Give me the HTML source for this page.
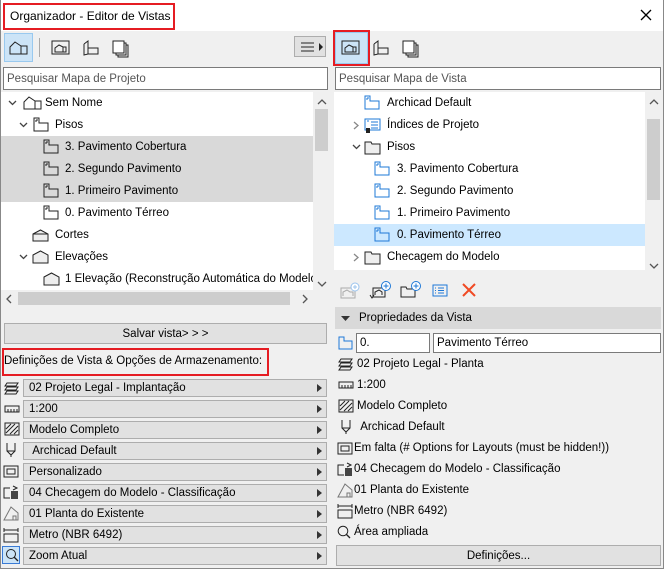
<!DOCTYPE html>
<html><head><meta charset="utf-8">
<style>
*{box-sizing:border-box;margin:0;padding:0}
body{width:664px;height:569px;overflow:hidden;background:#f0f0f0;font-family:"Liberation Sans",sans-serif;font-size:11.5px;color:#000;position:relative}
.a{position:absolute}
.t{position:absolute;white-space:nowrap;line-height:14px}
svg{position:absolute;overflow:visible}
.dd{position:absolute;left:23px;width:304px;height:18px;background:#e1e1e1;border:1px solid #adadad;padding-left:5px;line-height:16px;white-space:nowrap;font-size:11.5px}
.dd:after{content:"";position:absolute;right:4px;top:4px;border-left:5px solid #333;border-top:4px solid transparent;border-bottom:4px solid transparent}
.pr{position:absolute;left:357px;white-space:nowrap;line-height:14px}
</style></head><body>
<div class="a" style="left:0;top:0;width:664px;height:31px;background:#fff"></div>
<div class="a" style="left:0;top:0;width:1px;height:569px;background:#888"></div>
<div class="a" style="left:663px;top:0;width:1px;height:569px;background:#888"></div>
<div class="a" style="left:0;top:568px;width:664px;height:1px;background:#888"></div>
<div class="a" style="left:3px;top:3px;width:172px;height:27px;border:2px solid #e51c23"></div>
<div class="t" style="left:10px;top:9px;font-size:12px">Organizador - Editor de Vistas</div>
<svg style="left:640px;top:9px" width="12" height="12"><path d="M1 1L11 11M11 1L1 11" stroke="#000" stroke-width="1.3"/></svg>

<div class="a" style="left:4px;top:33px;width:29px;height:29px;background:#cce4f7;border:1px solid #99c9ef"></div>
<svg style="left:9px;top:41px" width="20" height="14"><path d="M1 13V6L6 1L12 5H18V13ZM12 5V13M6 1L12 5" fill="none" stroke="#222"/></svg>
<div class="a" style="left:39px;top:38px;width:1px;height:19px;background:#aaa"></div>
<svg style="left:51px;top:40px" width="20" height="16"><rect x="1" y="1" width="17" height="13" fill="none" stroke="#222"/><path d="M4 12V8L8 5L12 7H15V12ZM12 7V12" fill="none" stroke="#222"/></svg>
<svg style="left:81px;top:40px" width="20" height="16"><path d="M3 4L7 1V14H17V8H7M3 4V15L7 14" fill="none" stroke="#222"/></svg>
<svg style="left:112px;top:40px" width="18" height="18"><rect x="1" y="1" width="11" height="12" fill="#fff" stroke="#222"/><path d="M12 3H14V15H4V13M14 5H16V17H6V15" fill="none" stroke="#222"/></svg>
<div class="a" style="left:294px;top:36px;width:32px;height:21px;background:#e1e1e1;border:1px solid #adadad"></div>
<svg style="left:301px;top:42px" width="22" height="10"><path d="M0 1H13M0 5H13M0 9H13" stroke="#222"/><path d="M18 1L22 5L18 9Z" fill="#222"/></svg>

<div class="a" style="left:333px;top:30px;width:37px;height:36px;border:2px solid #e51c23"></div>
<div class="a" style="left:335px;top:32px;width:33px;height:32px;background:#cce4f7;border:1px solid #99c9ef"></div>
<svg style="left:341px;top:40px" width="20" height="16"><rect x="1" y="1" width="17" height="13" fill="none" stroke="#222"/><path d="M4 12V8L8 5L12 7H15V12ZM12 7V12" fill="none" stroke="#222"/></svg>
<svg style="left:371px;top:40px" width="20" height="16"><path d="M3 4L7 1V14H17V8H7M3 4V15L7 14" fill="none" stroke="#222"/></svg>
<svg style="left:402px;top:40px" width="18" height="18"><rect x="1" y="1" width="11" height="12" fill="#fff" stroke="#222"/><path d="M12 3H14V15H4V13M14 5H16V17H6V15" fill="none" stroke="#222"/></svg>

<div class="a" style="left:3px;top:67px;width:325px;height:23px;background:#fff;border:1px solid #7a7a7a"></div>
<div class="t" style="left:7px;top:72px;color:#555">Pesquisar Mapa de Projeto</div>
<div class="a" style="left:335px;top:67px;width:326px;height:23px;background:#fff;border:1px solid #7a7a7a"></div>
<div class="t" style="left:339px;top:72px;color:#555">Pesquisar Mapa de Vista</div>

<div class="a" style="left:1px;top:92px;width:313px;height:198px;background:#fff"></div>
<div class="a" style="left:1px;top:136px;width:312px;height:66px;background:#d9d9d9"></div>
<div class="a" style="left:313px;top:92px;width:17px;height:198px;background:#f0f0f0"></div>
<div class="a" style="left:315px;top:109px;width:13px;height:42px;background:#cdcdcd"></div>
<svg style="left:318px;top:99px" width="8" height="6"><path d="M0 5L4 1L8 5" fill="none" stroke="#555" stroke-width="1.3"/></svg>
<svg style="left:318px;top:281px" width="8" height="6"><path d="M0 1L4 5L8 1" fill="none" stroke="#555" stroke-width="1.3"/></svg>
<div class="a" style="left:1px;top:290px;width:330px;height:18px;background:#f0f0f0"></div>
<div class="a" style="left:18px;top:292px;width:272px;height:13px;background:#cdcdcd"></div>
<svg style="left:6px;top:295px" width="6" height="8"><path d="M5 0L1 4L5 8" fill="none" stroke="#555" stroke-width="1.3"/></svg>
<svg style="left:302px;top:295px" width="6" height="8"><path d="M1 0L5 4L1 8" fill="none" stroke="#555" stroke-width="1.3"/></svg>

<svg style="left:8px;top:100px" width="9" height="6"><path d="M1 1L4.5 4.5L8 1" fill="none" stroke="#444" stroke-width="1.3"/></svg>
<svg style="left:23px;top:96px" width="20" height="14"><path d="M1 13V6L6 1L12 5H18V13ZM12 5V13M6 1L12 5" fill="none" stroke="#222"/></svg>
<div class="t" style="left:45px;top:96px">Sem Nome</div>
<svg style="left:19px;top:122px" width="9" height="6"><path d="M1 1L4.5 4.5L8 1" fill="none" stroke="#444" stroke-width="1.3"/></svg>
<svg style="left:33px;top:117px" width="17" height="15"><path d="M1 1H6V6H15V14H1Z" fill="none" stroke="#222"/><path d="M3 3V5M3 3H5" stroke="#222"/></svg>
<div class="t" style="left:55px;top:118px">Pisos</div>

<svg style="left:43px;top:139px" width="17" height="15"><path d="M1 1H6V6H15V14H1Z" fill="none" stroke="#222"/><path d="M3 3V5M3 3H5" stroke="#222"/></svg>
<div class="t" style="left:65px;top:140px">3. Pavimento Cobertura</div>
<svg style="left:43px;top:161px" width="17" height="15"><path d="M1 1H6V6H15V14H1Z" fill="none" stroke="#222"/><path d="M3 3V5M3 3H5" stroke="#222"/></svg>
<div class="t" style="left:65px;top:162px">2. Segundo Pavimento</div>
<svg style="left:43px;top:183px" width="17" height="15"><path d="M1 1H6V6H15V14H1Z" fill="none" stroke="#222"/><path d="M3 3V5M3 3H5" stroke="#222"/></svg>
<div class="t" style="left:65px;top:184px">1. Primeiro Pavimento</div>
<svg style="left:43px;top:205px" width="17" height="15"><path d="M1 1H6V6H15V14H1Z" fill="none" stroke="#222"/><path d="M3 3V5M3 3H5" stroke="#222"/></svg>
<div class="t" style="left:65px;top:206px">0. Pavimento Térreo</div>
<svg style="left:32px;top:229px" width="18" height="13"><path d="M1 5L8.5 1L16 5V12H1ZM1 5H16" fill="#eee" stroke="#222"/></svg>
<div class="t" style="left:55px;top:228px">Cortes</div>
<svg style="left:19px;top:254px" width="9" height="6"><path d="M1 1L4.5 4.5L8 1" fill="none" stroke="#444" stroke-width="1.3"/></svg>
<svg style="left:32px;top:250px" width="18" height="14"><path d="M1 5L8.5 1L16 5V13H1Z" fill="#eee" stroke="#222"/></svg>
<div class="t" style="left:55px;top:250px">Elevações</div>
<svg style="left:43px;top:272px" width="18" height="14"><path d="M1 5L8.5 1L16 5V13H1Z" fill="#eee" stroke="#222"/></svg>
<div class="t" style="left:65px;top:272px;width:248px;overflow:hidden">1 Elevação (Reconstrução Automática do Modelo)</div>

<div class="a" style="left:4px;top:323px;width:323px;height:21px;background:#e1e1e1;border:1px solid #adadad"></div>
<div class="t" style="left:4px;top:327px;width:323px;text-align:center">Salvar vista&gt; &gt; &gt;</div>
<div class="a" style="left:2px;top:348px;width:267px;height:28px;border:2px solid #e51c23"></div>
<div class="t" style="left:4px;top:354px">Definições de Vista &amp; Opções de Armazenamento:</div>

<svg style="left:4px;top:381px" width="16" height="14"><path d="M3 2H14L12 5H1ZM3 6H14L12 9H1ZM3 10H14L12 13H1Z" fill="none" stroke="#222"/></svg>
<div class="dd" style="top:379px">02 Projeto Legal - Implantação</div>
<svg style="left:4px;top:405px" width="16" height="8"><path d="M1 1H15V7H1ZM4 4V7M7 4V7M10 4V7M13 4V7" fill="none" stroke="#222"/></svg>
<div class="dd" style="top:400px">1:200</div>
<svg style="left:4px;top:422px" width="16" height="14"><rect x="1" y="1" width="14" height="12" fill="none" stroke="#222"/><path d="M2 7L7 2M6 12L14 4M2 11L11 2M10 12L14 8" stroke="#222"/></svg>
<div class="dd" style="top:421px">Modelo Completo</div>
<svg style="left:5px;top:442px" width="12" height="16"><path d="M2 1V9L6 13L10 9V1M6 13V15M2 9H10" fill="none" stroke="#222"/></svg>
<div class="dd" style="top:442px">&nbsp;Archicad Default</div>
<svg style="left:3px;top:465px" width="16" height="13"><rect x="1" y="1" width="14" height="11" fill="none" stroke="#222"/><rect x="4" y="4" width="8" height="5" fill="none" stroke="#222"/></svg>
<div class="dd" style="top:463px">Personalizado</div>
<svg style="left:3px;top:485px" width="16" height="15"><path d="M7 3H1V13H7" fill="none" stroke="#222"/><rect x="8" y="6" width="7" height="8" fill="#444"/><path d="M10 1L14 3L10 5" fill="none" stroke="#222"/></svg>
<div class="dd" style="top:484px">04 Checagem do Modelo - Classificação</div>
<svg style="left:3px;top:506px" width="16" height="15"><path d="M1 14L8 1L15 7V14ZM10 14V10H13V14" fill="none" stroke="#777"/></svg>
<div class="dd" style="top:505px">01 Planta do Existente</div>
<svg style="left:3px;top:527px" width="16" height="16"><path d="M1 1V5M15 1V5M1 3H15" stroke="#222"/><rect x="1" y="7" width="14" height="8" fill="none" stroke="#222"/></svg>
<div class="dd" style="top:526px">Metro (NBR 6492)</div>
<div class="a" style="left:2px;top:546px;width:18px;height:18px;background:#cce4f7;border:1px solid #3a7bd5"></div>
<svg style="left:5px;top:548px" width="14" height="14"><circle cx="6" cy="6" r="4.5" fill="none" stroke="#222"/><path d="M9 9L13 13" stroke="#222" stroke-width="1.3"/></svg>
<div class="dd" style="top:547px">Zoom Atual</div>

<div class="a" style="left:334px;top:92px;width:311px;height:178px;background:#fff"></div>
<div class="a" style="left:645px;top:92px;width:16px;height:178px;background:#f0f0f0"></div>
<div class="a" style="left:647px;top:119px;width:13px;height:81px;background:#cdcdcd"></div>
<svg style="left:650px;top:99px" width="8" height="6"><path d="M0 5L4 1L8 5" fill="none" stroke="#555" stroke-width="1.3"/></svg>
<svg style="left:650px;top:263px" width="8" height="6"><path d="M0 1L4 5L8 1" fill="none" stroke="#555" stroke-width="1.3"/></svg>
<div class="a" style="left:334px;top:224px;width:311px;height:22px;background:#cce8ff"></div>

<svg style="left:364px;top:95px" width="17" height="15"><path d="M1 1H6V6H15V14H1Z" fill="none" stroke="#1e78d7"/><path d="M3 3V5M3 3H5" stroke="#1e78d7"/></svg>
<div class="t" style="left:387px;top:96px">Archicad Default</div>
<svg style="left:353px;top:121px" width="6" height="9"><path d="M1 1L5 4.5L1 8" fill="none" stroke="#888" stroke-width="1.3"/></svg>
<svg style="left:364px;top:118px" width="17" height="16"><rect x="1" y="1" width="15" height="11" fill="none" stroke="#1e78d7"/><path d="M7 4H14M7 7H14M7 10H14M3 3H5" stroke="#1e78d7"/><rect x="2" y="10" width="4" height="5" fill="#222"/></svg>
<div class="t" style="left:387px;top:118px">Índices de Projeto</div>
<svg style="left:352px;top:144px" width="9" height="6"><path d="M1 1L4.5 4.5L8 1" fill="none" stroke="#444" stroke-width="1.3"/></svg>
<svg style="left:364px;top:140px" width="18" height="15"><path d="M1 2H7L8 4H16V14H1Z" fill="#eee" stroke="#222"/></svg>
<div class="t" style="left:387px;top:140px">Pisos</div>
<svg style="left:374px;top:161px" width="17" height="15"><path d="M1 1H6V6H15V14H1Z" fill="none" stroke="#1e78d7"/><path d="M3 3V5M3 3H5" stroke="#1e78d7"/></svg>
<div class="t" style="left:397px;top:162px">3. Pavimento Cobertura</div>
<svg style="left:374px;top:183px" width="17" height="15"><path d="M1 1H6V6H15V14H1Z" fill="none" stroke="#1e78d7"/><path d="M3 3V5M3 3H5" stroke="#1e78d7"/></svg>
<div class="t" style="left:397px;top:184px">2. Segundo Pavimento</div>
<svg style="left:374px;top:205px" width="17" height="15"><path d="M1 1H6V6H15V14H1Z" fill="none" stroke="#1e78d7"/><path d="M3 3V5M3 3H5" stroke="#1e78d7"/></svg>
<div class="t" style="left:397px;top:206px">1. Primeiro Pavimento</div>
<svg style="left:374px;top:227px" width="17" height="15"><path d="M1 1H6V6H15V14H1Z" fill="none" stroke="#1e78d7"/><path d="M3 3V5M3 3H5" stroke="#1e78d7"/></svg>
<div class="t" style="left:397px;top:228px">0. Pavimento Térreo</div>
<svg style="left:353px;top:253px" width="6" height="9"><path d="M1 1L5 4.5L1 8" fill="none" stroke="#888" stroke-width="1.3"/></svg>
<svg style="left:364px;top:250px" width="18" height="15"><path d="M1 2H7L8 4H16V14H1Z" fill="#eee" stroke="#222"/></svg>
<div class="t" style="left:387px;top:250px">Checagem do Modelo</div>

<svg style="left:340px;top:282px" width="20" height="18"><path d="M1 6H15V16H1ZM3 14V10L7 8L10 10H13V14" fill="none" stroke="#aaa"/><circle cx="15" cy="5" r="4" fill="#fff" stroke="#9cc4ee"/><path d="M15 3V7M13 5H17" stroke="#9cc4ee"/></svg>
<svg style="left:369px;top:281px" width="22" height="20"><path d="M4 7H16V16H4ZM6 14V11L10 9L13 11V14" fill="none" stroke="#222"/><path d="M1 14L3 17L5 14" stroke="#222" fill="none"/><circle cx="17" cy="5" r="4.5" fill="#fff" stroke="#1e78d7"/><path d="M17 2.5V7.5M14.5 5H19.5" stroke="#1e78d7"/></svg>
<svg style="left:400px;top:281px" width="22" height="18"><path d="M1 6H6L7 8H15V16H1Z" fill="none" stroke="#222"/><circle cx="16" cy="5" r="4.5" fill="#fff" stroke="#1e78d7"/><path d="M16 2.5V7.5M13.5 5H18.5" stroke="#1e78d7"/></svg>
<svg style="left:432px;top:284px" width="16" height="13"><rect x="1" y="1" width="14" height="11" fill="none" stroke="#1e78d7"/><path d="M3 4H4M6 4H12M3 6.5H4M6 6.5H12M3 9H4M6 9H12" stroke="#1e78d7"/></svg>
<svg style="left:462px;top:283px" width="14" height="14"><path d="M1 1L13 13M13 1L1 13" stroke="#f04a24" stroke-width="2"/></svg>

<div class="a" style="left:335px;top:307px;width:326px;height:22px;background:#d9d9d9"></div>
<svg style="left:341px;top:316px" width="9" height="5"><path d="M0 0H9L4.5 5Z" fill="#333"/></svg>
<div class="t" style="left:359px;top:311px">Propriedades da Vista</div>
<svg style="left:338px;top:336px" width="16" height="14"><path d="M1 1H6V5H14V13H1Z" fill="none" stroke="#1e78d7"/></svg>
<div class="a" style="left:356px;top:333px;width:74px;height:20px;background:#fff;border:1px solid #7a7a7a"></div>
<div class="t" style="left:360px;top:336px">0.</div>
<div class="a" style="left:433px;top:333px;width:228px;height:20px;background:#fff;border:1px solid #7a7a7a"></div>
<div class="t" style="left:437px;top:336px">Pavimento Térreo</div>

<svg style="left:338px;top:357px" width="16" height="14"><path d="M3 2H14L12 5H1ZM3 6H14L12 9H1ZM3 10H14L12 13H1Z" fill="none" stroke="#222"/></svg>
<div class="pr" style="top:357px">02 Projeto Legal - Planta</div>
<svg style="left:338px;top:381px" width="16" height="8"><path d="M1 1H15V7H1ZM4 4V7M7 4V7M10 4V7M13 4V7" fill="none" stroke="#222"/></svg>
<div class="pr" style="top:378px">1:200</div>
<svg style="left:338px;top:399px" width="16" height="14"><rect x="1" y="1" width="14" height="12" fill="none" stroke="#222"/><path d="M2 7L7 2M6 12L14 4M2 11L11 2M10 12L14 8" stroke="#222"/></svg>
<div class="pr" style="top:399px">Modelo Completo</div>
<svg style="left:340px;top:419px" width="12" height="16"><path d="M2 1V9L6 13L10 9V1M6 13V15M2 9H10" fill="none" stroke="#222"/></svg>
<div class="pr" style="top:420px">&nbsp;Archicad Default</div>
<svg style="left:337px;top:442px" width="16" height="13"><rect x="1" y="1" width="14" height="11" fill="none" stroke="#222"/><rect x="4" y="4" width="8" height="5" fill="none" stroke="#222"/></svg>
<div class="pr" style="top:441px;left:354px">Em falta (# Options for Layouts (must be hidden!))</div>
<svg style="left:337px;top:462px" width="16" height="15"><path d="M7 3H1V13H7" fill="none" stroke="#222"/><rect x="8" y="6" width="7" height="8" fill="#444"/><path d="M10 1L14 3L10 5" fill="none" stroke="#222"/></svg>
<div class="pr" style="top:462px;left:354px">04 Checagem do Modelo - Classificação</div>
<svg style="left:337px;top:483px" width="16" height="15"><path d="M1 14L8 1L15 7V14ZM10 14V10H13V14" fill="none" stroke="#777"/></svg>
<div class="pr" style="top:483px;left:354px">01 Planta do Existente</div>
<svg style="left:337px;top:503px" width="16" height="16"><path d="M1 1V5M15 1V5M1 3H15" stroke="#222"/><rect x="1" y="7" width="14" height="8" fill="none" stroke="#222"/></svg>
<div class="pr" style="top:504px;left:354px">Metro (NBR 6492)</div>
<svg style="left:337px;top:525px" width="14" height="14"><circle cx="6" cy="6" r="4.8" fill="none" stroke="#222"/><path d="M9.5 9.5L13 13" stroke="#222" stroke-width="1.3"/></svg>
<div class="pr" style="top:525px;left:354px">Área ampliada</div>

<div class="a" style="left:336px;top:545px;width:325px;height:21px;background:#e1e1e1;border:1px solid #adadad"></div>
<div class="t" style="left:336px;top:549px;width:325px;text-align:center">Definições...</div>
</body></html>
